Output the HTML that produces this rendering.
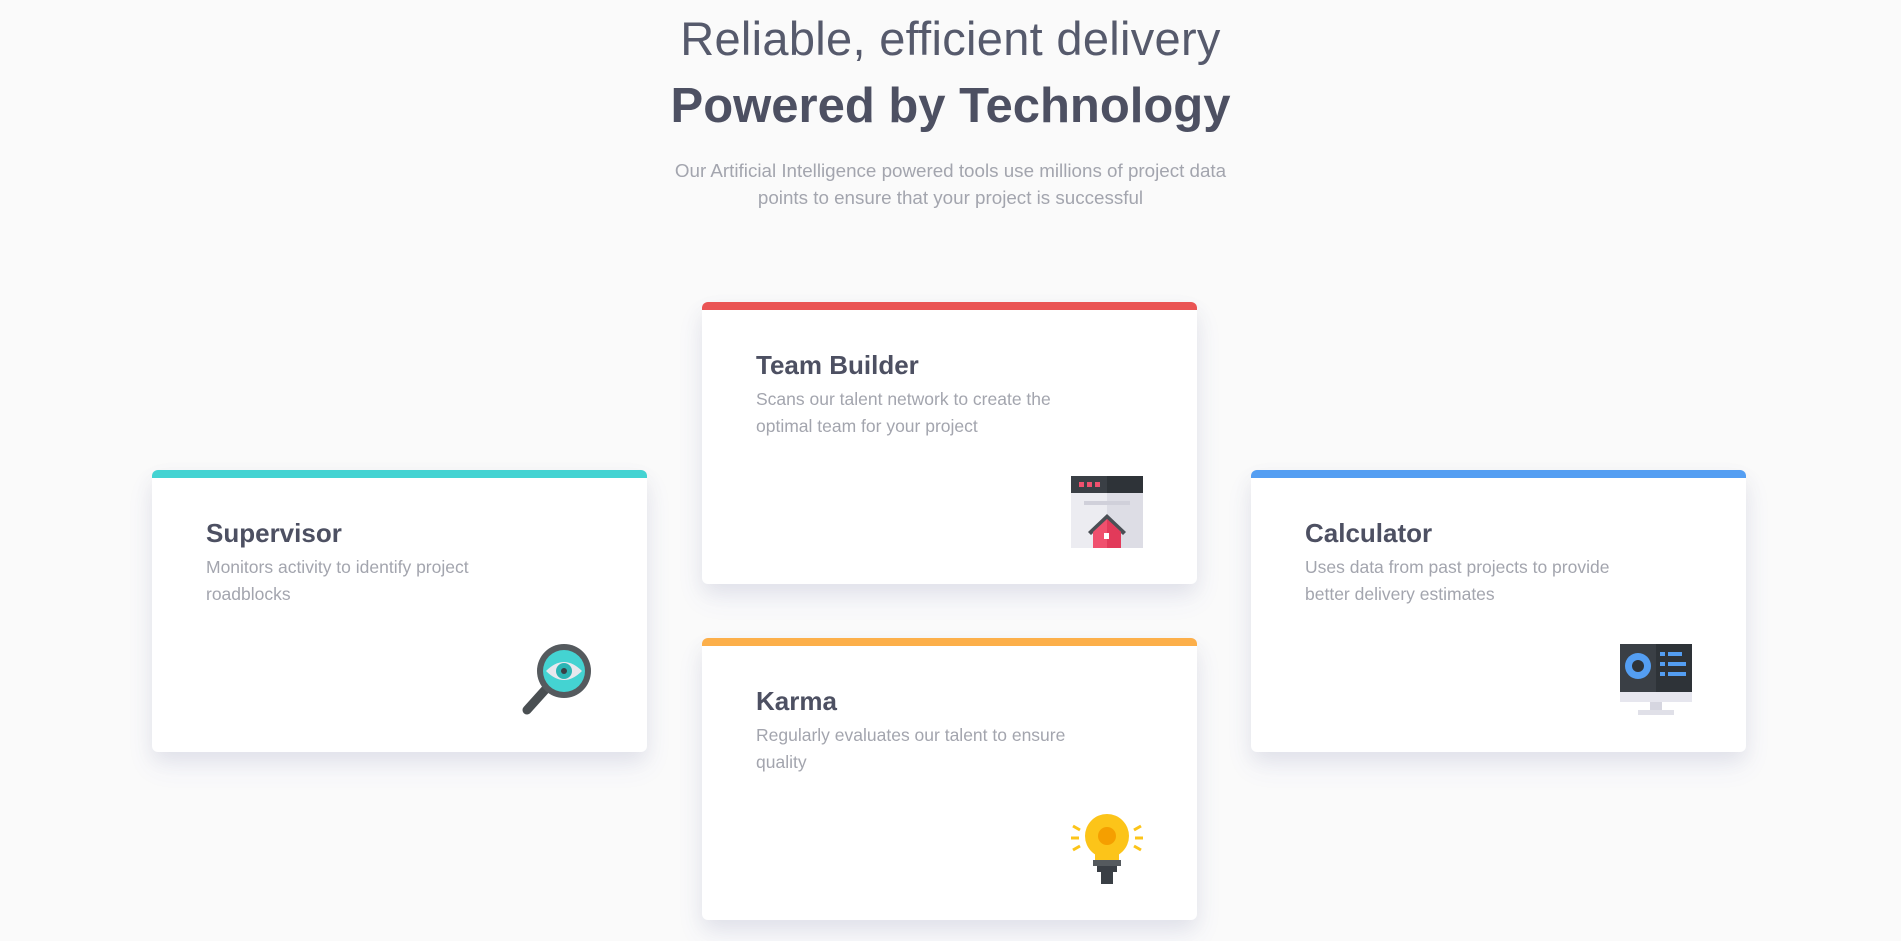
<!DOCTYPE html>
<html><head><style>
*{margin:0;padding:0;box-sizing:border-box}
body{width:1901px;height:941px;background:#fafafa;font-family:"Liberation Sans",sans-serif;position:relative;overflow:hidden;color:#4d5062}
.h1{position:absolute;left:0;width:1901px;text-align:center;font-size:47px;font-weight:300;top:11px;color:#565a6c;letter-spacing:0.3px}
.h2{position:absolute;left:0;width:1901px;text-align:center;font-size:49px;font-weight:700;top:78px;color:#4d5062}
.p{position:absolute;left:655px;width:591px;text-align:center;font-size:18.8px;line-height:27px;top:157px;color:#a3a5ae}
.card{position:absolute;width:495px;height:282px;background:#fff;border-radius:6px;border-top:8px solid;box-shadow:0 14px 28px rgba(73,93,207,0.08),0 8px 20px rgba(0,0,0,0.06)}
.card h3{position:absolute;left:54px;top:40px;font-size:26px;font-weight:700;color:#4d5062}
.card p{position:absolute;left:54px;top:76px;width:340px;font-size:17.5px;line-height:27px;color:#a3a5ae}
.card svg{position:absolute;right:54px;bottom:36px;width:72px;height:72px}
</style></head><body>
<div class="h1">Reliable, efficient delivery</div>
<div class="h2">Powered by Technology</div>
<div class="p">Our Artificial Intelligence powered tools use millions of project data<br>points to ensure that your project is successful</div>

<div class="card" style="left:152px;top:470px;border-color:#44d3d2">
<h3>Supervisor</h3><p>Monitors activity to identify project roadblocks</p>
<svg viewBox="0 0 72 72"><line x1="6" y1="66" x2="24" y2="46" stroke="#4a4f52" stroke-width="9" stroke-linecap="round"/><circle cx="43" cy="27" r="27" fill="#555a5e"/><circle cx="43" cy="27" r="21" fill="#44d3d2"/><path d="M25 27 Q43 9 61 27 Q43 45 25 27Z" fill="#e8e8ee"/><circle cx="43" cy="27" r="8" fill="#2bb5b4"/><circle cx="43" cy="27" r="3" fill="#3a3f45"/></svg>
</div>

<div class="card" style="left:702px;top:302px;border-color:#ea5454">
<h3>Team Builder</h3><p>Scans our talent network to create the optimal team for your project</p>
<svg viewBox="0 0 72 72"><rect x="0" y="0" width="72" height="17" fill="#3a3f45"/><rect x="36" y="0" width="36" height="17" fill="#2e3338"/><rect x="0" y="17" width="72" height="55" fill="#ececf1"/><rect x="36" y="17" width="36" height="55" fill="#dddde5"/><rect x="8" y="6" width="5" height="5" fill="#f0506e"/><rect x="16" y="6" width="5" height="5" fill="#f0506e"/><rect x="24" y="6" width="5" height="5" fill="#f0506e"/><rect x="13" y="25" width="46" height="4" fill="#d0d0da"/><path d="M17 56 L36 38 L55 56 L52 59 L36 44 L20 59Z" fill="#4a4f55"/><path d="M22 56 L36 43 L50 56 V72 H22Z" fill="#f0506e"/><path d="M36 43 L50 56 V72 H36Z" fill="#e23a5a"/><rect x="33" y="57" width="5" height="6" fill="#fff"/></svg>
</div>

<div class="card" style="left:702px;top:638px;border-color:#fcaf4a">
<h3>Karma</h3><p>Regularly evaluates our talent to ensure quality</p>
<svg viewBox="0 0 72 72"><g stroke="#fcc419" stroke-width="3"><line x1="2" y1="14" x2="9" y2="18"/><line x1="0" y1="26" x2="8" y2="26"/><line x1="2" y1="38" x2="9" y2="34"/><line x1="70" y1="14" x2="63" y2="18"/><line x1="72" y1="26" x2="64" y2="26"/><line x1="70" y1="38" x2="63" y2="34"/></g><circle cx="36" cy="24" r="22" fill="#fcc419"/><path d="M24 40 H48 V48 H24Z" fill="#fcc419"/><circle cx="36" cy="24" r="9" fill="#f59f00"/><rect x="22" y="48" width="28" height="6" fill="#555a5e"/><rect x="26" y="54" width="20" height="6" fill="#3a3f45"/><rect x="30" y="60" width="12" height="12" fill="#3a3f45"/></svg>
</div>

<div class="card" style="left:1251px;top:470px;border-color:#549ef2">
<h3>Calculator</h3><p>Uses data from past projects to provide better delivery estimates</p>
<svg viewBox="0 0 72 72"><rect x="0" y="0" width="72" height="48" fill="#3a3f45"/><rect x="36" y="0" width="36" height="48" fill="#2e3338"/><rect x="0" y="48" width="72" height="10" fill="#e6e6ee"/><rect x="30" y="58" width="12" height="8" fill="#d6d6e0"/><rect x="18" y="66" width="36" height="5" fill="#e0e0e8"/><circle cx="18" cy="22" r="13" fill="#549ef2"/><circle cx="18" cy="22" r="6" fill="#2e3338"/><g fill="#549ef2"><rect x="40" y="8" width="5" height="4"/><rect x="48" y="8" width="14" height="4"/><rect x="40" y="18" width="5" height="4"/><rect x="48" y="18" width="18" height="4"/><rect x="40" y="28" width="5" height="4"/><rect x="48" y="28" width="18" height="4"/></g></svg>
</div>
</body></html>
